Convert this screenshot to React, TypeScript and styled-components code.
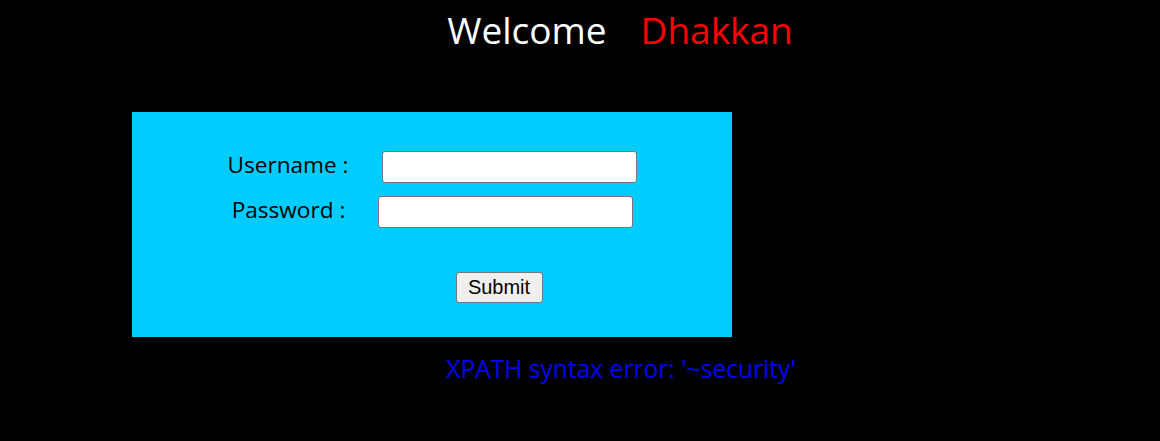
import React from "react";
import styled, { createGlobalStyle } from "styled-components";

const Global = createGlobalStyle`
  html, body { margin: 0; padding: 0; background: #000; }
  body { font-family: "Open Sans", "Noto Sans", sans-serif; }
`;

const Page = styled.div`
  width: 1160px;
  height: 441px;
  background: #000;
  display: flex;
  flex-direction: column;
`;

const Title = styled.div`
  height: 58px;
  display: flex;
  justify-content: center;
  align-items: center;
  padding-left: 80px;
  font-size: 37px;
  color: #fff;
  gap: 34px;
`;

const Red = styled.span`
  color: #ff0000;
`;

const Box = styled.form`
  margin: 54px 0 0 132px;
  width: 600px;
  height: 225px;
  box-sizing: border-box;
  background: #00ccff;
  padding-top: 39px;
  display: flex;
  flex-direction: column;
  align-items: center;
`;

const Row = styled.div<{ $gap: number }>`
  display: flex;
  align-items: center;
  gap: ${(p) => p.$gap}px;
  margin-bottom: 13px;
  padding-left: 1px;
`;

const Label = styled.label`
  font-size: 22.6px;
  line-height: 28px;
  margin-top: -4px;
  color: #000;
`;

const Input = styled.input`
  width: 255px;
  height: 32px;
  box-sizing: border-box;
  border: 1px solid #767676;
  border-radius: 3px;
  background: #fff;
  margin: 0;
`;

const Submit = styled.button`
  margin: 31px 0 0 134px;
  width: 87px;
  height: 31px;
  box-sizing: border-box;
  font-family: "Liberation Sans", Arial, sans-serif;
  font-size: 20px;
  color: #000;
  background: #efefef;
  border: 1px solid #767676;
  border-radius: 3px;
  padding: 0;
`;

const Error = styled.div`
  margin-top: 15px;
  padding-left: 82px;
  text-align: center;
  font-size: 24.6px;
  color: #0000ff;
`;

export default function App() {
  return (
    <Page>
      <Global />
      <Title>
        <span>Welcome</span>
        <Red>Dhakkan</Red>
      </Title>
      <Box onSubmit={(e) => e.preventDefault()}>
        <Row $gap={34}>
          <Label>Username :</Label>
          <Input type="text" />
        </Row>
        <Row $gap={33}>
          <Label>Password :</Label>
          <Input type="text" />
        </Row>
        <Submit type="submit">Submit</Submit>
      </Box>
      <Error>XPATH syntax error: '~security'</Error>
    </Page>
  );
}
